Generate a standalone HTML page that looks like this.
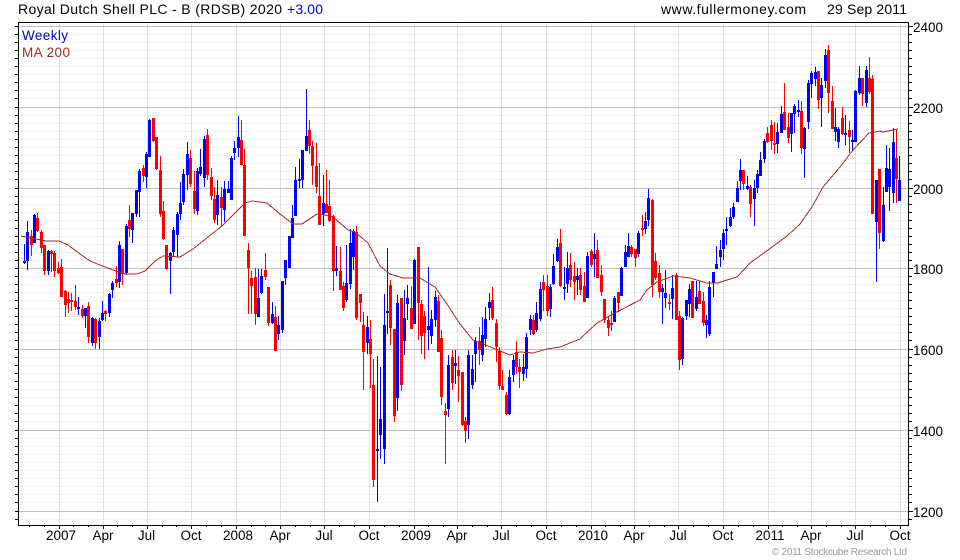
<!DOCTYPE html>
<html><head><meta charset="utf-8"><title>Royal Dutch Shell PLC - B (RDSB)</title>
<style>html,body{margin:0;padding:0;background:#fff}svg{display:block}text{font-family:"Liberation Sans",Arial,sans-serif;font-size:13.5px;fill:#000}</style></head>
<body>
<svg width="960" height="560" viewBox="0 0 960 560" xmlns="http://www.w3.org/2000/svg">
<rect width="960" height="560" fill="#fff"/>
<defs><path id="t" d="M0 34H3M0 42H3M0 50H3M0 58H3M0 66H3M0 74H3M0 82H3M0 90H3M0 98H3M0 115H3M0 123H3M0 131H3M0 139H3M0 147H3M0 155H3M0 163H3M0 171H3M0 179H3M0 196H3M0 204H3M0 212H3M0 220H3M0 228H3M0 236H3M0 244H3M0 252H3M0 260H3M0 276H3M0 284H3M0 292H3M0 300H3M0 308H3M0 316H3M0 324H3M0 332H3M0 340H3M0 357H3M0 365H3M0 373H3M0 381H3M0 389H3M0 397H3M0 405H3M0 413H3M0 421H3M0 438H3M0 446H3M0 454H3M0 462H3M0 470H3M0 478H3M0 486H3M0 494H3M0 502H3M0 519H3"/></defs>
<g shape-rendering="crispEdges" fill="none">
<g transform="translate(0 .5)"><use href="#t" transform="translate(0 0)" stroke="none"/>
<path stroke="#f0f0f0" d="M19 34H908M19 42H908M19 50H908M19 58H908M19 66H908M19 74H908M19 82H908M19 90H908M19 98H908M19 115H908M19 123H908M19 131H908M19 139H908M19 147H908M19 155H908M19 163H908M19 171H908M19 179H908M19 196H908M19 204H908M19 212H908M19 220H908M19 228H908M19 236H908M19 244H908M19 252H908M19 260H908M19 276H908M19 284H908M19 292H908M19 300H908M19 308H908M19 316H908M19 324H908M19 332H908M19 340H908M19 357H908M19 365H908M19 373H908M19 381H908M19 389H908M19 397H908M19 405H908M19 413H908M19 421H908M19 438H908M19 446H908M19 454H908M19 462H908M19 470H908M19 478H908M19 486H908M19 494H908M19 502H908M19 519H908"/>
</g>
<g transform="translate(.5 0)"><path stroke="#e0e0e0" d="M59 23V525M103 23V525M147 23V525M191 23V525M236 23V525M280 23V525M324 23V525M369 23V525M414 23V525M457 23V525M501 23V525M546 23V525M591 23V525M634 23V525M678 23V525M723 23V525M768 23V525M811 23V525M855 23V525M900 23V525"/></g>
<g transform="translate(0 .5)"><path stroke="#c0c0c0" d="M19 26H908M19 107H908M19 188H908M19 268H908M19 349H908M19 430H908M19 511H908"/></g>
<rect x="19" y="29" width="53" height="30" fill="#fff"/>
<g transform="translate(.5 0)">
<path stroke="#00f" d="M24 244V264M27 221V270M34 214V243M48 250V275M78 297V315M85 308V328M92 317V346M99 318V349M102 301V321M109 293V317M112 281V298M119 241V288M126 224V275M132 213V243M136 190V217M139 169V217M146 152V188M149 119V157M170 252V294M173 227V257M177 212V257M180 182V220M183 169V205M187 142V190M197 168V215M200 149V176M204 136V187M217 180V225M224 181V222M228 181V193M231 156V200M234 141V160M238 116V157M258 269V317M261 269V294M272 302V324M278 316V340M282 281V333M285 260V285M289 236V268M292 205V238M295 167V216M299 159V188M302 150V188M306 89V151M323 175V226M336 246V276M346 245V302M350 229V289M353 229V270M367 316V354M377 356V502M380 367V459M384 294V464M387 248V334M397 295V411M404 290V355M407 285V320M414 259V324M428 267V350M431 310V344M435 291V327M448 355V417M455 350V384M468 350V439M472 355V389M475 337V382M482 317V361M485 307V347M489 293V320M509 370V415M513 355V382M523 354V381M526 333V378M530 315V335M536 302V332M540 282V321M550 284V317M553 254V285M557 239V262M564 267V300M567 252V293M577 268V295M587 252V298M594 233V277M614 296V322M621 267V296M625 245V267M628 233V257M638 231V257M645 212V234M648 189V226M662 284V324M665 270V308M672 275V319M682 317V365M686 300V320M689 284V317M696 281V311M706 315V338M709 281V336M713 272V297M716 246V269M720 240V267M723 229V260M726 217V245M730 208V227M733 203V219M737 181V202M740 159V190M747 176V190M754 180V226M757 170V193M760 152V176M764 139V163M777 123V153M781 106V133M791 113V152M794 104V133M798 100V117M804 127V178M808 80V129M811 71V98M815 67V86M821 78V127M825 49V88M835 108V141M838 127V148M845 115V145M852 130V150M855 90V142M859 66V95M866 66V107M876 180V282M883 187V242M886 145V192M889 148V211M893 128V203M899 156V201"/>
<path stroke="#00f" stroke-width="3" d="M24 261V263M27 232V261M34 215V243M48 251V271M78 307V309M85 308V316M92 318V343M99 321V337M102 313V320M109 294V313M112 283V290M119 245V282M126 226V273M132 213V230M136 190V214M139 171V192M146 154V177M149 120V157M170 253V261M173 230V252M177 214V235M180 203V214M183 174V202M187 154V175M197 171V211M200 167V174M204 139V178M217 195V215M224 189V210M228 189V193M231 158V200M234 148V153M238 137V148M258 298V317M261 276V293M272 314V323M278 325V334M282 281V330M285 260V278M289 236V268M292 218V238M295 180V216M299 179V181M302 150V180M306 136V151M323 203V214M336 268V271M346 283V300M350 243V284M353 231V257M367 327V343M377 449V451M380 419V435M384 325V449M387 311V313M397 303V398M404 318V341M407 298V304M414 260V324M428 326V330M431 319V336M435 297V320M448 365V409M455 363V366M468 355V425M472 369V385M475 341V354M482 335V355M485 319V339M489 302V308M509 377V414M513 360V375M523 367V374M526 337V369M530 319V330M536 313V330M540 289V319M550 287V309M553 266V284M557 247V261M564 287V289M567 268V284M577 276V280M587 256V298M594 254V259M614 298V322M621 268V296M625 252V267M628 246V257M638 233V254M645 221V229M648 198V220M662 288V292M665 293V298M672 288V299M682 318V359M686 300V316M689 289V304M696 297V309M706 320V325M709 287V334M713 272V283M716 264V269M720 250V257M723 233V249M726 229V231M730 217V226M733 207V217M737 188V202M740 170V181M747 186V189M754 188V199M757 174V188M760 160V176M764 141V159M777 132V144M781 114V133M791 113V134M794 106V114M798 110V112M804 128V149M808 83V122M811 73V84M815 72V79M821 85V98M825 55V81M835 127V132M838 129V142M845 133V135M852 140V142M855 91V142M859 78V93M866 70V103M876 180V222M883 205V241M886 168V192M889 169V187M893 142V193M899 180V201"/>
<path stroke="#f00" d="M31 230V256M37 213V232M41 230V253M44 245V275M51 250V272M54 251V277M58 262V274M61 259V297M65 290V317M68 292V313M71 293V311M75 285V310M82 305V318M88 302V343M95 318V349M105 310V321M116 266V287M122 249V285M129 205V237M143 165V182M153 118V142M156 137V170M160 156V217M163 201V240M166 245V270M190 150V187M194 171V214M207 129V180M211 168V200M214 187V223M221 187V227M241 120V165M244 149V236M248 243V314M251 271V314M255 268V325M265 253V280M268 287V326M275 306V351M309 120V154M312 141V185M316 143V193M319 163V225M326 170V212M329 180V222M333 215V291M340 247V290M343 282V311M356 226V320M360 294V322M363 312V390M370 320V388M373 359V487M390 280V345M394 329V422M401 298V391M411 286V329M418 247V340M421 300V354M424 311V359M438 295V352M441 330V405M445 403V464M452 350V390M458 356V402M462 372V426M465 417V443M479 327V365M492 287V320M496 319V362M499 347V390M502 370V390M506 392V415M516 341V374M519 359V388M533 315V335M543 275V311M547 275V316M560 229V287M570 253V287M574 262V300M580 268V295M584 272V302M591 249V267M597 240V278M601 265V296M604 299V323M608 317V336M611 311V331M618 292V312M631 245V257M635 249V267M642 215V236M652 199V297M655 253V280M659 265V298M669 294V310M676 273V320M679 311V370M692 281V318M699 281V304M703 292V326M743 170V190M750 185V217M767 127V143M771 120V150M774 122V154M784 83V130M788 113V143M801 101V154M818 71V109M828 45V113M832 86V129M842 107V135M849 121V153M862 78V106M869 57V94M872 75V214M879 169V249M896 129V203"/>
<path stroke="#f00" stroke-width="3" d="M31 236V245M37 218V231M41 232V248M44 245V271M51 251V254M54 253V271M58 268V273M61 267V297M65 291V305M68 299V303M71 300V302M75 301V307M82 309V316M88 306V337M95 319V343M105 311V314M116 279V283M122 249V274M129 220V229M143 168V176M153 118V141M156 137V169M160 170V214M163 211V239M166 245V269M190 158V184M194 191V209M207 135V175M211 177V196M214 199V220M221 197V208M241 140V165M244 165V236M248 250V268M251 278V286M255 277V314M265 270V277M268 287V323M275 317V351M309 130V146M312 146V166M316 166V187M319 196V225M326 204V213M329 206V221M333 216V271M340 271V290M343 286V308M356 232V318M360 294V303M363 325V352M370 339V354M373 385V480M390 285V328M394 329V416M401 298V385M411 308V329M418 247V303M421 304V336M424 316V333M438 301V352M441 338V397M445 411V415M452 357V383M458 370V376M462 372V425M465 421V431M479 341V350M492 300V318M496 323V347M499 351V386M502 386V390M506 395V414M516 352V367M519 367V372M533 320V334M543 282V290M547 286V311M560 243V286M570 265V280M574 276V282M580 275V290M584 286V302M591 251V265M597 250V278M601 275V292M604 299V320M608 320V328M611 323V325M618 292V303M631 247V254M635 249V258M642 228V230M652 200V285M655 261V278M659 273V292M669 302V304M676 275V320M679 316V360M692 281V318M699 291V304M703 301V323M743 170V184M750 187V204M767 133V142M771 125V141M774 143V145M784 112V130M788 127V138M801 111V148M818 71V100M828 50V93M832 101V129M842 118V134M849 130V137M862 78V94M869 78V92M872 79V214M879 169V233M896 158V179"/>
</g>
<polyline stroke="#a52a2a" stroke-width="1" points="21,236 46,241 59,241 68,245 80,254 90,261 100,265 113,270 125,274 137,274 145,271 155,261 163,256 180,257 193,249 208,237 222,226 233,215 245,203 252,201 267,203 280,214 293,224 302,224 317,214 320,214 333,217 348,230 355,232 368,243 380,266 390,274 403,278 420,278 435,287 447,304 460,324 473,340 493,348 510,355 520,352 533,353 547,349 560,347 580,339 597,323 613,314 640,300 647,290 657,282 673,276 690,278 707,283 718,283 730,279 737,277 750,263 768,250 787,236 800,224 812,207 823,187 840,167 853,150 869,133 880,131 883,132 898,129"/>
<g stroke="#000" transform="translate(0 .5)">
<path d="M18 22H909M18 525H909"/>
<use href="#t" x="15"/>
<path d="M15 26H18M15 107H18M15 188H18M15 268H18M15 349H18M15 430H18M15 511H18M909 26H913M909 107H913M909 188H913M909 268H913M909 349H913M909 430H913M909 511H913"/>
</g>
<g stroke="#000" transform="translate(909 .5)"><use href="#t"/></g>
<g stroke="#000" transform="translate(.5 0)">
<path d="M18 22V526M908 22V526"/>
<path d="M29 526V527M44 526V527M73 526V527M88 526V527M117 526V527M132 526V527M162 526V527M176 526V527M206 526V527M221 526V527M251 526V527M265 526V527M295 526V527M310 526V527M339 526V527M354 526V527M384 526V527M399 526V527M428 526V527M443 526V527M472 526V527M487 526V527M516 526V527M531 526V527M561 526V527M576 526V527M605 526V527M620 526V527M649 526V527M664 526V527M693 526V527M708 526V527M738 526V527M753 526V527M782 526V527M797 526V527M826 526V527M841 526V527M870 526V527M885 526V527"/>
<path d="M59 526V529M103 526V529M147 526V529M191 526V529M236 526V529M280 526V529M324 526V529M369 526V529M414 526V529M457 526V529M501 526V529M546 526V529M591 526V529M634 526V529M678 526V529M723 526V529M768 526V529M811 526V529M855 526V529M900 526V529"/>
</g>
</g>
<text x="18" y="14" textLength="264" style="font-size:14px">Royal Dutch Shell PLC - B (RDSB) 2020</text>
<text x="287" y="14" textLength="36" style="font-size:14px;fill:#0000c0">+3.00</text>
<text x="661" y="14" textLength="145" style="font-size:14px">www.fullermoney.com</text>
<text x="827" y="14" textLength="80" style="font-size:14px">29 Sep 2011</text>
<text x="22" y="40" textLength="46" style="fill:#0000c0">Weekly</text>
<text x="22" y="57" textLength="48" style="fill:#a52a2a">MA 200</text>
<text x="913" y="32" textLength="30">2400</text>
<text x="913" y="113" textLength="30">2200</text>
<text x="913" y="194" textLength="30">2000</text>
<text x="913" y="274" textLength="30">1800</text>
<text x="913" y="355" textLength="30">1600</text>
<text x="913" y="436" textLength="30">1400</text>
<text x="913" y="517" textLength="30">1200</text>
<g text-anchor="middle">
<text x="61" y="540">2007</text><text x="103" y="540">Apr</text><text x="146.5" y="540">Jul</text><text x="191" y="540">Oct</text>
<text x="238" y="540">2008</text><text x="280" y="540">Apr</text><text x="324" y="540">Jul</text><text x="369" y="540">Oct</text>
<text x="416" y="540">2009</text><text x="457" y="540">Apr</text><text x="501" y="540">Jul</text><text x="546" y="540">Oct</text>
<text x="593" y="540">2010</text><text x="634" y="540">Apr</text><text x="678" y="540">Jul</text><text x="723" y="540">Oct</text>
<text x="770" y="540">2011</text><text x="811" y="540">Apr</text><text x="855" y="540">Jul</text><text x="900" y="540">Oct</text>
</g>
<text x="772" y="555" textLength="135" style="font-size:10px;fill:#999">© 2011 Stockcube Research Ltd</text>
</svg>
</body></html>
